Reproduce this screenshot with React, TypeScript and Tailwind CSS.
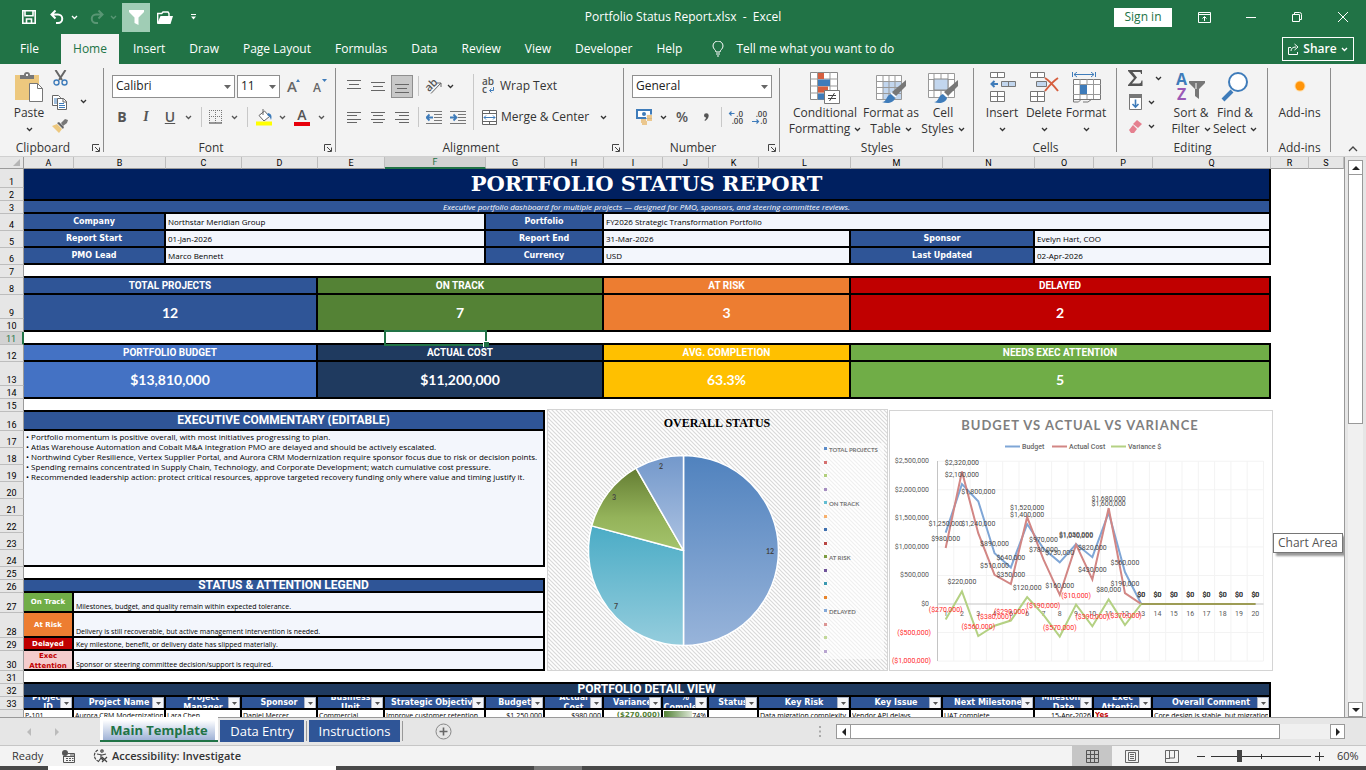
import type { ReactNode } from 'react';
import clsx from 'clsx';

const columns = [
  { name: 'A', width: 'w-[50px]' },
  { name: 'B', width: 'w-[92px]' },
  { name: 'C', width: 'w-[76px]' },
  { name: 'D', width: 'w-[76px]' },
  { name: 'E', width: 'w-[67px]' },
  { name: 'F', width: 'w-[101px]' },
  { name: 'G', width: 'w-[59px]' },
  { name: 'H', width: 'w-[59px]' },
  { name: 'I', width: 'w-[59px]' },
  { name: 'J', width: 'w-[46px]' },
  { name: 'K', width: 'w-[50px]' },
  { name: 'L', width: 'w-[92px]' },
  { name: 'M', width: 'w-[92px]' },
  { name: 'N', width: 'w-[92px]' },
  { name: 'O', width: 'w-[59px]' },
  { name: 'P', width: 'w-[59px]' },
  { name: 'Q', width: 'w-[118px]' },
  { name: 'R', width: 'w-[38px]' },
  { name: 'S', width: '' },
];

const detailHeaders = [
  'Project\nID',
  'Project Name',
  'Project\nManager',
  'Sponsor',
  'Business\nUnit',
  'Strategic Objective',
  'Budget',
  'Actual\nCost',
  'Variance',
  '%\nComplete',
  'Status',
  'Key Risk',
  'Key Issue',
  'Next Milestone',
  'Milestone\nDate',
  'Exec\nAttention',
  'Overall Comment',
];

const menuTabs = ['Insert', 'Draw', 'Page Layout', 'Formulas', 'Data', 'Review', 'View', 'Developer', 'Help'];

const commentary = [
  'Portfolio momentum is positive overall, with most initiatives progressing to plan.',
  'Atlas Warehouse Automation and Cobalt M&A Integration PMO are delayed and should be actively escalated.',
  'Northwind Cyber Resilience, Vertex Supplier Portal, and Aurora CRM Modernization require sponsor focus due to risk or decision points.',
  'Spending remains concentrated in Supply Chain, Technology, and Corporate Development; watch cumulative cost pressure.',
  'Recommended leadership action: protect critical resources, approve targeted recovery funding only where value and timing justify it.',
];

/* ---------- small shared pieces ---------- */

function Chevron({ className = '' }: { className?: string }) {
  return (
    <svg width="7" height="5" viewBox="0 0 7 5" fill="none" className={className}>
      <path d="M1 1l2.5 2.5L6 1" stroke="currentColor" strokeWidth="1.3" />
    </svg>
  );
}

function Tool({ label, width = 'w-6', children }: { label: string; width?: string; children: ReactNode }) {
  return (
    <button type="button" aria-label={label} className={clsx('flex h-6 shrink-0 items-center justify-center', width)}>
      {children}
    </button>
  );
}

function Divider({ width }: { width: string }) {
  return (
    <span className={clsx('flex h-5 shrink-0 justify-center', width)}>
      <span className="w-px bg-[#c8c8c8]" />
    </span>
  );
}

function Group({ label, width, launcher, children }: { label: string; width: string; launcher?: boolean; children: ReactNode }) {
  return (
    <section className={clsx('relative flex shrink-0 flex-col', width)}>
      <div className="h-[76px]">{children}</div>
      <div className={clsx('text-center leading-4', launcher && 'pr-[18px]')}>{label}</div>
      {launcher && (
        <button type="button" aria-label={`${label} settings`} className="absolute right-1 bottom-1">
          <svg width="8" height="8" viewBox="0 0 8 8" fill="none" stroke="#444">
            <path d="M.5 7V.5H7M3 3l4 4M7.5 3.5v4h-4" />
          </svg>
        </button>
      )}
      <span className="absolute top-1 right-0 bottom-1 w-px bg-[#8c8c8c]" />
    </section>
  );
}

function BigButton({ lines, width, inlineArrow, children }: { lines: string[]; width: string; inlineArrow?: boolean; children: ReactNode }) {
  return (
    <button type="button" className={clsx('flex shrink-0 flex-col items-center pt-2 leading-4 whitespace-nowrap', width)}>
      <span className="flex h-[33px] items-start justify-center">{children}</span>
      {lines.map((line, i) => (
        <span key={line} className="flex items-center gap-1">
          {line}
          {inlineArrow && i === lines.length - 1 && <Chevron />}
        </span>
      ))}
      {!inlineArrow && (
        <span className="flex h-4 items-center">
          <Chevron />
        </span>
      )}
    </button>
  );
}

function Combo({ label, value, width }: { label: string; value: string; width: string }) {
  return (
    <div className={clsx('relative', width)}>
      <select aria-label={label} defaultValue={value} className="h-[23px] w-full appearance-none border border-[#8f8f8f] bg-white px-[3px] text-xs text-[#222] outline-none">
        <option>{value}</option>
      </select>
      <svg width="7" height="4" viewBox="0 0 7 4" className="pointer-events-none absolute top-[10px] right-1">
        <path d="M0 0h7L3.500 4z" fill="#666" />
      </svg>
    </div>
  );
}

/* ---------- icons ---------- */

function PasteIcon() {
  return (
    <svg width="28" height="30" viewBox="0 0 28 30">
      <rect x="0" y="3" width="24" height="25" fill="#edc87e" />
      <path d="M5 7V3h4a3 3 0 0 1 6 0h4v4z" fill="#777" />
      <rect x="11" y="2" width="2" height="2" fill="#f3f3f3" />
      <path d="M14.500 11.500h8l5 5v13h-13z" fill="#fff" stroke="#777" />
      <path d="M22.500 11.500v5h5" fill="none" stroke="#777" />
    </svg>
  );
}

function CutIcon() {
  return (
    <svg width="15" height="16" viewBox="0 0 15 16" fill="none">
      <path d="M2.500 0l6.500 10M12.500 0L6 10" stroke="#666" strokeWidth="2" />
      <circle cx="3.500" cy="12.500" r="2.500" stroke="#3f7cba" strokeWidth="1.400" />
      <circle cx="11.500" cy="12.500" r="2.500" stroke="#3f7cba" strokeWidth="1.400" />
    </svg>
  );
}

function CopyIcon() {
  return (
    <svg width="16" height="15" viewBox="0 0 16 15">
      <path d="M.5.5h6l2 2v8h-8z" fill="#fff" stroke="#666" />
      <path d="M2 4h4M2 6h4M2 8h3" stroke="#3f7cba" />
      <path d="M5.500 3.500h6l3 3v8h-9z" fill="#fff" stroke="#666" />
      <path d="M11 3.500V7h4" fill="none" stroke="#666" />
      <path d="M7 8.500h5M7 10.500h6M7 12.500h6" stroke="#3f7cba" />
    </svg>
  );
}

function BrushIcon() {
  return (
    <svg width="16" height="14" viewBox="0 0 16 14">
      <path d="M0 7l5-2 5 5-3 4z" fill="#edc87e" />
      <path d="M5 4l2-1 5 5-1 2z" fill="#666" />
      <path d="M9 4l4-4 3 1-1 3-4 3z" fill="#777" />
    </svg>
  );
}

function AlignIcon({ rows }: { rows: [number, number, number][] }) {
  return (
    <svg width="15" height="13" viewBox="0 0 15 13" stroke="#666">
      {rows.map(([y, x1, x2]) => (
        <path key={y} d={`M${x1} ${y}H${x2}`} />
      ))}
    </svg>
  );
}

function IndentIcon({ right }: { right?: boolean }) {
  return (
    <svg width="16" height="13" viewBox="0 0 16 13" fill="none">
      <path d="M0 .5h16M8 3.500h8M8 6.500h8M8 9.500h8M0 12.500h16" stroke="#777" />
      <path d={right ? 'M0 6.500h6M3.500 3.500l3 3-3 3' : 'M7 6.500H1M3.500 3.500l-3 3 3 3'} stroke="#3f7cba" strokeWidth="1.800" />
    </svg>
  );
}

function FontSizeIcon({ up }: { up?: boolean }) {
  return (
    <svg width="14" height="14" viewBox="0 0 14 14" className="overflow-visible">
      <text x="0" y="13" fontSize={up ? 15 : 12} className="font-['Open_Sans',sans-serif] font-semibold" fill="#666">
        A
      </text>
      <path d={up ? 'M9 3l2-3 2 3z' : 'M9 0h5l-2.500 3z'} fill="#3f7cba" />
    </svg>
  );
}

function BordersIcon() {
  return (
    <svg width="14" height="14" viewBox="0 0 14 14" fill="none" stroke="#777">
      <path d="M.5 0v13M6.500 0v13M12.500 0v13M0 .5h13M0 6.500h13" strokeDasharray="1 1" />
      <path d="M0 13h13" strokeWidth="1.500" />
    </svg>
  );
}

function FillIcon() {
  return (
    <svg width="17" height="17" viewBox="0 0 17 17">
      <path d="M3 6.500L8.500 2l5 5.500L8 12z" fill="#fff" stroke="#666" />
      <path d="M7 0v6" stroke="#666" />
      <path d="M12 4c4 1 4 4 3 7-1-3-2-4-4-5z" fill="#3f7cba" />
      <rect x="0" y="12.500" width="16" height="4" fill="#ff0" />
    </svg>
  );
}

function OrientationIcon() {
  return (
    <svg width="18" height="16" viewBox="0 0 18 16" className="overflow-visible">
      <text x="0" y="11" fontSize="11" transform="rotate(-45 6 8)" className="font-['Open_Sans',sans-serif] font-semibold" fill="#555">
        ab
      </text>
      <path d="M6 15.500L16 5M12 5h4v4" fill="none" stroke="#666" />
    </svg>
  );
}

function WrapIcon() {
  return (
    <svg width="14" height="16" viewBox="0 0 14 16" className="overflow-visible">
      <text x="0" y="7" fontSize="10" className="font-['Open_Sans',sans-serif] font-semibold" fill="#555">
        ab
      </text>
      <text x="0" y="15" fontSize="10" className="font-['Open_Sans',sans-serif] font-semibold" fill="#555">
        c
      </text>
      <path d="M11.500 9v3.500H8M9.500 10.500l-2 2 2 2" fill="none" stroke="#3f7cba" />
    </svg>
  );
}

function MergeIcon() {
  return (
    <svg width="15" height="15" viewBox="0 0 15 15" fill="none">
      <path d="M.5.500h14v14H.5z" fill="#fff" stroke="#666" />
      <path d="M.5 3.500h14M.5 11.500h14M7.500 0v3.500M7.500 11.500V15" stroke="#666" />
      <path d="M2 7.500h11M4 5.500l-2 2 2 2M11 5.500l2 2-2 2" stroke="#3f7cba" />
    </svg>
  );
}

function CurrencyIcon() {
  return (
    <svg width="17" height="16" viewBox="0 0 17 16">
      <path d="M1 1h14v8H1z" fill="#fff" stroke="#3f7cba" strokeWidth="2" />
      <circle cx="8" cy="5" r="2" fill="#3f7cba" />
      <path d="M10 5.500h6v4h-6z" fill="#f3f3f3" />
      <path d="M11 7h5M11 9h5M11 11h5M5 11h5M5 13h6M6 15h5" stroke="#e9b96e" strokeWidth="1.400" />
    </svg>
  );
}

function DecimalIcon({ top, bottom, left }: { top: string; bottom: string; left?: boolean }) {
  return (
    <svg width="16" height="15" viewBox="0 0 16 15" className="overflow-visible">
      <g className="font-['Open_Sans',sans-serif] font-semibold" fontSize="8" fill="#444" textAnchor="end">
        <text x="15" y="7">{top}</text>
        <text x="15" y="14">{bottom}</text>
      </g>
      <path d={left ? 'M6.500 3.500h-5M3.500 1.500l-2 2 2 2' : 'M0 11.500h6M4.500 9.500l2 2-2 2'} fill="none" stroke="#3f7cba" strokeWidth="1.200" />
    </svg>
  );
}

function ConditionalIcon() {
  return (
    <svg width="31" height="32" viewBox="0 0 31 32">
      <path d="M.5.500h27v27H.5z" fill="#fff" stroke="#888" />
      <path d="M0 7h28M0 14h28M0 21h28M7.500 0v28M20 0v28" stroke="#999" />
      <path d="M8 1h6v6H8zM8 14.500h10v6H8z" fill="#d65f3f" />
      <path d="M8 7.500h12v6.500H8zM8 21.500h6v6H8z" fill="#3f7cba" />
      <path d="M14.500 18.500h15v13h-15z" fill="#fff" stroke="#777" />
      <path d="M18 23.500h8M18 26.500h8M24.500 21l-5 8" stroke="#444" />
    </svg>
  );
}

function Paintbrush() {
  return (
    <>
      <path d="M30 8v6L20 24l-4-4z" fill="#777" />
      <path d="M6 30c5 0 4-7 9-8l4 4c-1 5-8 6-13 4z" fill="#3f7cba" />
      <path d="M15 21l5 4" stroke="#fff" strokeWidth="1.500" />
    </>
  );
}

function TableIcon() {
  return (
    <svg width="31" height="32" viewBox="0 0 31 32">
      <path d="M.5 3.500h25v24H.5z" fill="#fff" />
      <path d="M7 9h18v18H7z" fill="#c2d6ee" />
      <path d="M0 9.500h26M0 15.500h26M0 21.500h26M7 3v24M13 3v24M19 3v24M.5 3.500h25v24H.5z" fill="none" stroke="#999" />
      <Paintbrush />
    </svg>
  );
}

function CellStylesIcon() {
  return (
    <svg width="31" height="32" viewBox="0 0 31 32">
      <path d="M.5 1.500h26v24H.5z" fill="#fff" />
      <path d="M0 7.500h27M0 18.500h27M6 1v24M13 1v24M20 1v24M.5 1.500h26v24H.5z" fill="none" stroke="#999" />
      <path d="M6 7h14v11H6z" fill="#c2d6ee" stroke="#888" />
      <Paintbrush />
    </svg>
  );
}

function InsertIcon() {
  return (
    <svg width="27" height="31" viewBox="0 0 27 31" fill="none">
      <path d="M1.500.500h14v5h-14zM8.500.500v5M1.500 19.500h14v10h-14zM8.500 19.500v10M1.500 24.500h14" fill="#fff" stroke="#777" />
      <path d="M12.500 9.500h14v5h-14zM19.500 9.500v5" fill="#c2d6ee" stroke="#777" />
      <path d="M9 12H3M5.500 9l-3 3 3 3" stroke="#3f7cba" strokeWidth="2" />
    </svg>
  );
}

function DeleteIcon() {
  return (
    <svg width="29" height="31" viewBox="0 0 29 31" fill="none">
      <path d="M.5.500h14v5H.5zM7.500.500v5M.5 19.500h14v10H.5zM7.500 19.500v10M.5 24.500h14" fill="#fff" stroke="#777" />
      <path d="M6.500 9.500h10v5h-10z" fill="#c2d6ee" stroke="#777" />
      <path d="M15 6c5 3 9 8 13 13M28 6c-5 3-9 8-13 13" stroke="#d65f3f" strokeWidth="2" />
    </svg>
  );
}

function FormatIcon() {
  return (
    <svg width="29" height="32" viewBox="0 0 29 32" fill="none">
      <path d="M.5 0v5M23.500 0v5M2 2.500h20M5 0L2 2.500 5 5M19 0l3 2.500L19 5" stroke="#3f7cba" />
      <path d="M1.500 7.500h27v20h-27z" fill="#fff" stroke="#777" />
      <path d="M1 12.500h28M1 22.500h28M8 7v20M15 7v5M15 23v4M21.500 7v20" stroke="#999" />
      <path d="M8 13h7v9H8z" fill="#3f7cba" />
      <path d="M1.500 27v3h5l3-3M11 30h5l4-3" stroke="#777" />
    </svg>
  );
}

function SigmaIcon() {
  return (
    <svg width="15" height="16" viewBox="0 0 15 16">
      <path d="M0 0h14v4h-1c0-2-1-2-2-2H4.500L9 7.500 4 13.500h7c2 0 2-1 2.500-3h1V16H0v-1l6-7-6-7z" fill="#555" />
    </svg>
  );
}

function FillDownIcon() {
  return (
    <svg width="14" height="16" viewBox="0 0 14 16">
      <path d="M.5 3.500h12v12H.5z" fill="#fff" stroke="#777" />
      <path d="M0 0h13v4H0z" fill="#777" />
      <path d="M6.500 5.500V13M3.500 10l3 3 3-3" fill="none" stroke="#3f7cba" strokeWidth="1.600" />
    </svg>
  );
}

function EraserIcon() {
  return (
    <svg width="14" height="13" viewBox="0 0 14 13">
      <path d="M8 0l5 4-4 4-5-4z" fill="#e5808f" />
      <path d="M4 5l4 4-3 4H2L0 10z" fill="#e5808f" />
    </svg>
  );
}

function SortIcon() {
  return (
    <svg width="30" height="31" viewBox="0 0 30 31" className="overflow-visible">
      <g fontSize="16" className="font-['Open_Sans',sans-serif] font-bold">
        <text x="0" y="13" fill="#3f7cba">A</text>
        <text x="1" y="28" fill="#9b59b6">Z</text>
      </g>
      <path d="M13 9h16v2l-6 6v10l-4-3v-7l-6-6z" fill="#777" />
      <path d="M20 11v6" stroke="#fff" />
    </svg>
  );
}

function FindIcon() {
  return (
    <svg width="28" height="31" viewBox="0 0 28 31">
      <path d="M2 28l9-9" stroke="#3f7cba" strokeWidth="4" />
      <circle cx="17" cy="10" r="9" fill="#fff" stroke="#3f7cba" strokeWidth="2" />
    </svg>
  );
}

/* ---------- window chrome ---------- */

function TitleBar() {
  return (
    <header className="relative flex h-[34px] shrink-0 items-center justify-between text-white">
      <div className="flex items-center pl-[22px]">
        <button type="button" aria-label="Save">
          <svg width="14" height="14" viewBox="0 0 14 14" fill="none" stroke="#fff" strokeWidth="1.600">
            <path d="M.8.800h12.400v12.400H.8z" />
            <path d="M3 .8v5h8v-5M4.500 13V9h5v4" />
          </svg>
        </button>
        <button type="button" aria-label="Undo" className="ml-[14px] flex items-center gap-[7px]">
          <svg width="14" height="14" viewBox="0 0 14 14" fill="none" stroke="#fff" strokeWidth="2">
            <path d="M5.500.500L1.500 4.500l4 4M2 4.500h6a4.200 4.200 0 0 1 0 8.500H6" />
          </svg>
          <Chevron />
        </button>
        <button type="button" aria-label="Redo" className="ml-3 flex items-center gap-[6px] opacity-25">
          <svg width="14" height="14" viewBox="0 0 14 14" fill="none" stroke="#fff" strokeWidth="2">
            <path d="M8.500.500l4 4-4 4M12 4.500H6A4.200 4.200 0 0 0 6 13h2" />
          </svg>
          <Chevron />
        </button>
        <button type="button" aria-label="Filter" className="ml-[5px] flex h-[29px] w-7 items-center justify-center bg-[#a0cdb5]">
          <svg width="15" height="15" viewBox="0 0 15 15" fill="#fff">
            <path d="M0 0h15v2L9.500 7.500V15l-4-2V7.500L0 2z" />
          </svg>
        </button>
        <button type="button" aria-label="Open" className="ml-[7px]">
          <svg width="16" height="13" viewBox="0 0 16 13">
            <path d="M.7 12V2.500h4L6 1h5l1 1.500V5" fill="none" stroke="#fff" strokeWidth="1.400" />
            <path d="M3.500 5H16l-2.500 8H0z" fill="#fff" />
          </svg>
        </button>
        <button type="button" aria-label="Customize toolbar" className="ml-[18px]">
          <svg width="5" height="6" viewBox="0 0 5 6">
            <path d="M0 0h5v1H0zM0 2.500h5L2.500 5.500z" fill="#fff" />
          </svg>
        </button>
      </div>
      <h1 className="absolute left-1/2 -translate-x-1/2 whitespace-pre">Portfolio Status Report.xlsx  -  Excel</h1>
      <div className="flex items-center pr-[18px]">
        <button type="button" className="h-[19px] w-[58px] bg-white text-[#217346]">
          Sign in
        </button>
        <button type="button" aria-label="Ribbon display options" className="ml-[26px]">
          <svg width="13" height="11" viewBox="0 0 13 11" fill="none" stroke="#fff">
            <path d="M.5.500h12v10H.5zM.5 2.500h12M6.500 9V5M4.500 6.500l2-2 2 2" />
          </svg>
        </button>
        <button type="button" aria-label="Minimize" className="ml-[35px]">
          <svg width="10" height="9" viewBox="0 0 10 9" stroke="#fff">
            <path d="M0 4.500h10" />
          </svg>
        </button>
        <button type="button" aria-label="Restore" className="ml-9">
          <svg width="10" height="10" viewBox="0 0 10 10" fill="none" stroke="#fff">
            <path d="M.5 2.500h7v7h-7zM2.500 2V.500h5a2 2 0 0 1 2 2v5H8" />
          </svg>
        </button>
        <button type="button" aria-label="Close" className="ml-9">
          <svg width="10" height="10" viewBox="0 0 10 10" stroke="#fff">
            <path d="M0 0l10 10M10 0L0 10" />
          </svg>
        </button>
      </div>
    </header>
  );
}

function MenuBar() {
  return (
    <nav className="flex h-[30px] shrink-0 items-center text-white">
      <a href="#file" className="pl-5">File</a>
      <a href="#home" className="ml-[22px] flex h-full w-[58px] items-center justify-center bg-[#f3f3f3] text-[#217346]">
        Home
      </a>
      <div className="ml-[14px] flex items-center gap-6">
        {menuTabs.map((tab) => (
          <a key={tab} href={`#${tab}`} className="whitespace-nowrap">
            {tab}
          </a>
        ))}
      </div>
      <svg width="12" height="16" viewBox="0 0 12 16" fill="none" stroke="#fff" className="ml-[30px]">
        <path d="M4 11C4 9 1 8 1 5a5 5 0 0 1 10 0c0 3-3 4-3 6zM4 13h4M5 15h2" />
      </svg>
      <a href="#tell-me" className="ml-3">Tell me what you want to do</a>
      <button type="button" className="mr-3 ml-auto flex h-6 w-[72px] items-center justify-center gap-1 border border-white font-semibold">
        <svg width="11" height="12" viewBox="0 0 11 12" fill="none" stroke="#fff">
          <path d="M3 4.500H.5v7h9V9M3 8c0-3 2-4 5-4M6.500 1l3.500 3-3.500 3" />
        </svg>
        Share
        <Chevron />
      </button>
    </nav>
  );
}

function Ribbon() {
  return (
    <div className="flex h-[92px] shrink-0 overflow-hidden bg-[#f3f3f3] text-[#333]">
      <Group label="Clipboard" width="w-[104px]" launcher>
        <div className="flex pl-2">
          <BigButton lines={['Paste']} width="w-[42px]">
            <PasteIcon />
          </BigButton>
          <div className="flex flex-col pt-[2px]">
            <Tool label="Cut" width="w-5"><CutIcon /></Tool>
            <Tool label="Copy" width="w-5"><CopyIcon /></Tool>
            <Tool label="Format painter" width="w-5"><BrushIcon /></Tool>
          </div>
          <button type="button" aria-label="Copy options" className="ml-[10px]">
            <Chevron />
          </button>
        </div>
      </Group>

      <Group label="Font" width="w-[232px]" launcher>
        <div className="flex h-11 items-center pl-2">
          <Combo label="Font name" value="Calibri" width="w-[123px]" />
          <Combo label="Font size" value="11" width="ml-[2px] w-[43px]" />
          <Tool label="Increase font size" width="w-7"><FontSizeIcon up /></Tool>
          <Tool label="Decrease font size"><FontSizeIcon /></Tool>
        </div>
        <div className="flex h-[18px] items-center pl-[6px] text-sm text-[#555]">
          <Tool label="Bold"><b>B</b></Tool>
          <Tool label="Italic"><i className="font-['Liberation_Serif',serif] font-bold">I</i></Tool>
          <Tool label="Underline"><span className="font-semibold underline">U</span></Tool>
          <Tool label="Underline options" width="w-3"><Chevron /></Tool>
          <Divider width="w-[14px]" />
          <Tool label="Borders" width="w-4"><BordersIcon /></Tool>
          <Tool label="Border options" width="w-5"><Chevron /></Tool>
          <Divider width="w-[6px]" />
          <Tool label="Fill colour" width="w-7"><FillIcon /></Tool>
          <Tool label="Fill options" width="w-2"><Chevron /></Tool>
          <Tool label="Font colour" width="w-8">
            <span className="w-4 border-b-4 border-red-600 text-center leading-[14px] font-semibold">A</span>
          </Tool>
          <Chevron />
        </div>
      </Group>

      <Group label="Alignment" width="w-[288px]" launcher>
        <div className="flex">
          <div className="pl-[6px]">
            <div className="flex h-11 items-center">
              <Tool label="Top align"><AlignIcon rows={[[0.5, 0, 14], [4.5, 2, 12], [8.5, 0, 14]]} /></Tool>
              <Tool label="Middle align"><AlignIcon rows={[[2.5, 0, 14], [6.5, 2, 12], [10.5, 0, 14]]} /></Tool>
              <button type="button" aria-label="Bottom align" className="mx-px flex h-[23px] w-[22px] items-end justify-center border border-[#8f8f8f] bg-[#c8c8c8] pb-1">
                <AlignIcon rows={[[4.5, 0, 14], [8.5, 2, 12], [12.5, 0, 14]]} />
              </button>
              <Divider width="w-2" />
              <Tool label="Orientation"><OrientationIcon /></Tool>
              <Tool label="Orientation options" width="w-2"><Chevron /></Tool>
            </div>
            <div className="flex h-[18px] items-center">
              <Tool label="Align left"><AlignIcon rows={[[1.5, 0, 14], [4.5, 0, 10], [8.5, 0, 14], [11.5, 0, 10]]} /></Tool>
              <Tool label="Center"><AlignIcon rows={[[1.5, 0, 14], [4.5, 2, 12], [8.5, 0, 14], [11.5, 2, 12]]} /></Tool>
              <Tool label="Align right"><AlignIcon rows={[[1.5, 0, 14], [4.5, 4, 14], [8.5, 0, 14], [11.5, 4, 14]]} /></Tool>
              <Divider width="w-2" />
              <Tool label="Decrease indent"><IndentIcon /></Tool>
              <Tool label="Increase indent"><IndentIcon right /></Tool>
            </div>
          </div>
          <span className="mt-[10px] ml-[3px] h-14 w-px bg-[#c8c8c8]" />
          <div className="pl-2">
            <button type="button" className="flex h-11 items-center gap-1">
              <WrapIcon />
              Wrap Text
            </button>
            <div className="flex h-[18px] items-center">
              <button type="button" className="flex items-center gap-1 whitespace-nowrap">
                <MergeIcon />
                Merge &amp; Center
              </button>
              <button type="button" aria-label="Merge options" className="ml-[11px]">
                <Chevron />
              </button>
            </div>
          </div>
        </div>
      </Group>

      <Group label="Number" width="w-[156px]" launcher>
        <div className="flex h-11 items-center pl-2">
          <Combo label="Number format" value="General" width="w-[140px]" />
        </div>
        <div className="flex h-[18px] items-center pl-2">
          <Tool label="Currency"><CurrencyIcon /></Tool>
          <Tool label="Currency options" width="w-[14px]"><Chevron /></Tool>
          <Tool label="Percent"><span className="text-sm font-semibold text-[#555]">%</span></Tool>
          <Tool label="Comma style">
            <svg width="5" height="8" viewBox="0 0 5 8">
              <path d="M0 2.500a2.300 2.300 0 0 1 4.700 0C4.700 5 3 7 1 8L.5 7C2 6 2 5 2 4.500A2 2 0 0 1 0 2.500z" fill="#555" />
            </svg>
          </Tool>
          <Divider width="w-[6px]" />
          <Tool label="Increase decimal"><DecimalIcon top=".0" bottom=".00" left /></Tool>
          <Tool label="Decrease decimal"><DecimalIcon top=".00" bottom=".0" /></Tool>
        </div>
      </Group>

      <Group label="Styles" width="w-[194px]">
        <div className="flex pl-[7px]">
          <BigButton lines={['Conditional', 'Formatting']} width="w-[76px]" inlineArrow><ConditionalIcon /></BigButton>
          <BigButton lines={['Format as', 'Table']} width="w-14" inlineArrow><TableIcon /></BigButton>
          <BigButton lines={['Cell', 'Styles']} width="w-12" inlineArrow><CellStylesIcon /></BigButton>
        </div>
      </Group>

      <Group label="Cells" width="w-[143px]">
        <div className="flex pl-[7px]">
          <BigButton lines={['Insert']} width="w-[42px]"><InsertIcon /></BigButton>
          <BigButton lines={['Delete']} width="w-[42px]"><DeleteIcon /></BigButton>
          <BigButton lines={['Format']} width="w-[42px]"><FormatIcon /></BigButton>
        </div>
      </Group>

      <Group label="Editing" width="w-[151px]">
        <div className="flex pl-[6px]">
          <div className="flex w-[46px] flex-col pt-[2px]">
            <button type="button" aria-label="AutoSum" className="flex h-6 items-center gap-3 pl-[5px]"><SigmaIcon /><Chevron /></button>
            <button type="button" aria-label="Fill" className="flex h-6 items-center gap-[5px] pl-[6px]"><FillDownIcon /><Chevron /></button>
            <button type="button" aria-label="Clear" className="flex h-6 items-center gap-[5px] pl-[6px]"><EraserIcon /><Chevron /></button>
          </div>
          <BigButton lines={['Sort &', 'Filter']} width="w-11" inlineArrow><SortIcon /></BigButton>
          <BigButton lines={['Find &', 'Select']} width="w-11" inlineArrow><FindIcon /></BigButton>
        </div>
      </Group>

      <Group label="Add-ins" width="w-[63px]">
        <button type="button" className="flex w-full flex-col items-center pt-2 leading-4">
          <span className="flex h-[33px] items-center pb-[6px]">
            <svg width="12" height="12" viewBox="0 0 12 12">
              <circle cx="6" cy="6" r="5.500" fill="#ffd9a0" />
              <circle cx="6" cy="6" r="4.500" fill="#ff9409" />
            </svg>
          </span>
          Add-ins
        </button>
      </Group>

      <button type="button" aria-label="Collapse the ribbon" className="ml-auto self-end pr-2 pb-1">
        <svg width="10" height="6" viewBox="0 0 10 6" fill="none" stroke="#444" strokeWidth="1.300">
          <path d="M1 5l4-4 4 4" />
        </svg>
      </button>
    </div>
  );
}

/* ---------- sheet ---------- */

function Row({ n, height, children }: { n: number; height: string; children?: ReactNode }) {
  const active = n === 11;
  return (
    <tr className={height}>
      <th
        scope="row"
        className={clsx(
          "border-b border-[#bdbdbd] p-0 align-bottom font-['Roboto',sans-serif] text-[9px] leading-[10px] font-normal",
          active ? 'border-r-2 border-r-[#217346] bg-[#d2d2d2] text-[#217346]' : 'border-r border-r-[#9b9b9b] bg-[#e6e6e6] text-black',
        )}
      >
        {n <= 33 && n}
      </th>
      {children}
    </tr>
  );
}

function Cell({ span, rows, className = '', children }: { span?: number; rows?: number; className?: string; children?: ReactNode }) {
  return (
    <td colSpan={span} rowSpan={rows} className={clsx('border-r-2 border-b-2 border-black p-0', className)}>
      <div className="overflow-hidden whitespace-nowrap">{children}</div>
    </td>
  );
}

const Gap = ({ span }: { span: number }) => <td colSpan={span} className="border-b-2 border-black p-0" />;
const Blank = ({ span }: { span: number }) => <td colSpan={span} className="p-0" />;

const labelCell = "bg-[#2f5597] text-center font-['DejaVu_Sans',sans-serif] text-[8px] leading-[10px] font-bold text-white";
const valueCell = 'bg-[#f3f6fc] pl-[2px]! text-[8px] leading-[10px] text-black';
const kpiTitle = "text-center font-['Roboto',sans-serif] text-[10px] leading-3 font-bold text-white";
const kpiValue = "text-center font-['Lato',sans-serif] text-sm leading-5 font-bold text-white";
const sectionCell = "text-center font-['Roboto',sans-serif] text-xs leading-[11px] font-bold text-white";
const legendText = 'bg-[#f3f6fc] pl-[2px]! align-bottom text-[7px] leading-[9px] text-black';
const badgeCell = "text-center font-['DejaVu_Sans',sans-serif] text-[7px] leading-[10px] font-bold text-white";
const dataCell = 'bg-white px-px! pt-px! align-top text-[7px] leading-[9px] text-black';

function FilterButton({ label }: { label: string }) {
  return (
    <button type="button" aria-label={label} className="absolute top-0 right-0 flex h-3 w-3 items-center justify-center border border-[#aab4c8] bg-[#f4f5f8]">
      <svg width="5" height="3" viewBox="0 0 5 3">
        <path d="M0 0h5L2.500 3z" fill="#555" />
      </svg>
    </button>
  );
}

function SheetTable() {
  return (
    <table className="w-full table-fixed border-separate border-spacing-0">
      <colgroup>
        <col className="w-6" />
        {columns.map((c) => (
          <col key={c.name} className={c.width} />
        ))}
      </colgroup>
      <thead>
        <tr className="h-3">
          <th className="border-r border-b border-[#9b9b9b] bg-[#e6e6e6] p-0">
            <svg width="7" height="7" viewBox="0 0 7 7" className="mr-[3px] ml-auto">
              <path d="M7 0v7H0z" fill="#b5b5b5" />
            </svg>
          </th>
          {columns.map((c) => (
            <th
              key={c.name}
              scope="col"
              className={clsx(
                "border-r border-r-[#bdbdbd] p-0 font-['Roboto',sans-serif] text-[9px] leading-[10px] font-normal",
                c.name === 'F' ? 'border-b-2 border-b-[#217346] bg-[#d2d2d2] text-[#217346]' : 'border-b border-b-[#9b9b9b] bg-[#e6e6e6] text-black',
              )}
            >
              {c.name}
            </th>
          ))}
        </tr>
      </thead>
      <tbody>
        <Row n={1} height="h-[19px]">
          <Cell span={17} rows={2} className="bg-[#002060] text-center font-['DejaVu_Serif',serif] text-[21px] leading-6 font-bold text-white">
            PORTFOLIO STATUS REPORT
          </Cell>
          <Blank span={2} />
        </Row>
        <Row n={2} height="h-[13px]"><Blank span={2} /></Row>
        <Row n={3} height="h-[13px]">
          <Cell span={17} className="bg-[#2f5597] text-center text-[8px] leading-[10px] text-white italic">
            Executive portfolio dashboard for multiple projects — designed for PMO, sponsors, and steering committee reviews.
          </Cell>
          <Blank span={2} />
        </Row>
        <Row n={4} height="h-[17px]">
          <Cell span={2} className={labelCell}>Company</Cell>
          <Cell span={4} className={valueCell}>Northstar Meridian Group</Cell>
          <Cell span={2} className={labelCell}>Portfolio</Cell>
          <Cell span={9} className={valueCell}>FY2026 Strategic Transformation Portfolio</Cell>
          <Blank span={2} />
        </Row>
        <Row n={5} height="h-[17px]">
          <Cell span={2} className={labelCell}>Report Start</Cell>
          <Cell span={4} className={valueCell}>01-Jan-2026</Cell>
          <Cell span={2} className={labelCell}>Report End</Cell>
          <Cell span={4} className={valueCell}>31-Mar-2026</Cell>
          <Cell span={2} className={labelCell}>Sponsor</Cell>
          <Cell span={3} className={valueCell}>Evelyn Hart, COO</Cell>
          <Blank span={2} />
        </Row>
        <Row n={6} height="h-[17px]">
          <Cell span={2} className={labelCell}>PMO Lead</Cell>
          <Cell span={4} className={valueCell}>Marco Bennett</Cell>
          <Cell span={2} className={labelCell}>Currency</Cell>
          <Cell span={4} className={valueCell}>USD</Cell>
          <Cell span={2} className={labelCell}>Last Updated</Cell>
          <Cell span={3} className={valueCell}>02-Apr-2026</Cell>
          <Blank span={2} />
        </Row>
        <Row n={7} height="h-[13px]"><Gap span={17} /><Blank span={2} /></Row>

        <Row n={8} height="h-[17px]">
          <Cell span={4} className={clsx(kpiTitle, 'bg-[#2f5597]')}>TOTAL PROJECTS</Cell>
          <Cell span={4} className={clsx(kpiTitle, 'bg-[#548235]')}>ON TRACK</Cell>
          <Cell span={4} className={clsx(kpiTitle, 'bg-[#ed7d31]')}>AT RISK</Cell>
          <Cell span={5} className={clsx(kpiTitle, 'bg-[#c00000]')}>DELAYED</Cell>
          <Blank span={2} />
        </Row>
        <Row n={9} height="h-6">
          <Cell span={4} rows={2} className={clsx(kpiValue, 'bg-[#2f5597]')}>12</Cell>
          <Cell span={4} rows={2} className={clsx(kpiValue, 'bg-[#548235]')}>7</Cell>
          <Cell span={4} rows={2} className={clsx(kpiValue, 'bg-[#ed7d31]')}>3</Cell>
          <Cell span={5} rows={2} className={clsx(kpiValue, 'bg-[#c00000]')}>2</Cell>
          <Blank span={2} />
        </Row>
        <Row n={10} height="h-[13px]"><Blank span={2} /></Row>
        <Row n={11} height="h-[13px]">
          <Gap span={5} />
          <td className="relative z-10 border-b-2 border-black p-0">
            <div className="absolute -inset-x-px -top-[2px] -bottom-[3px] border-2 border-[#217346]" />
            <div className="absolute -right-[3px] -bottom-1 h-[6px] w-[6px] border-t border-l border-white bg-[#217346]" />
          </td>
          <Gap span={11} />
          <Blank span={2} />
        </Row>

        <Row n={12} height="h-[17px]">
          <Cell span={4} className={clsx(kpiTitle, 'bg-[#4472c4]')}>PORTFOLIO BUDGET</Cell>
          <Cell span={4} className={clsx(kpiTitle, 'bg-[#1f3a5f]')}>ACTUAL COST</Cell>
          <Cell span={4} className={clsx(kpiTitle, 'bg-[#ffc000]')}>AVG. COMPLETION</Cell>
          <Cell span={5} className={clsx(kpiTitle, 'bg-[#70ad47]')}>NEEDS EXEC ATTENTION</Cell>
          <Blank span={2} />
        </Row>
        <Row n={13} height="h-6">
          <Cell span={4} rows={2} className={clsx(kpiValue, 'bg-[#4472c4]')}>$13,810,000</Cell>
          <Cell span={4} rows={2} className={clsx(kpiValue, 'bg-[#1f3a5f]')}>$11,200,000</Cell>
          <Cell span={4} rows={2} className={clsx(kpiValue, 'bg-[#ffc000]')}>63.3%</Cell>
          <Cell span={5} rows={2} className={clsx(kpiValue, 'bg-[#70ad47]')}>5</Cell>
          <Blank span={2} />
        </Row>
        <Row n={14} height="h-[13px]"><Blank span={2} /></Row>
        <Row n={15} height="h-[13px]"><Gap span={7} /><Blank span={12} /></Row>

        <Row n={16} height="h-[19px]">
          <Cell span={7} className={clsx(sectionCell, 'bg-[#2f5597]')}>EXECUTIVE COMMENTARY (EDITABLE)</Cell>
          <Blank span={12} />
        </Row>
        <Row n={17} height="h-[17px]">
          <Cell span={7} rows={8} className="bg-[#f3f6fc] pt-px! pl-[2px]! align-top text-[8px] leading-[10px] text-black">
            <ul>
              {commentary.map((line) => (
                <li key={line}>• {line}</li>
              ))}
            </ul>
          </Cell>
          <Blank span={12} />
        </Row>
        {[18, 19, 20, 21, 22, 23, 24].map((n) => (
          <Row key={n} n={n} height="h-[17px]"><Blank span={12} /></Row>
        ))}
        <Row n={25} height="h-[13px]"><Gap span={7} /><Blank span={12} /></Row>

        <Row n={26} height="h-[13px]">
          <Cell span={7} className={clsx(sectionCell, 'bg-[#2f5597]')}>STATUS &amp; ATTENTION LEGEND</Cell>
          <Blank span={12} />
        </Row>
        <Row n={27} height="h-5">
          <Cell className={clsx(badgeCell, 'bg-[#70ad47]')}>On Track</Cell>
          <Cell span={6} className={legendText}>Milestones, budget, and quality remain within expected tolerance.</Cell>
          <Blank span={12} />
        </Row>
        <Row n={28} height="h-[25px]">
          <Cell className={clsx(badgeCell, 'bg-[#ed7d31]')}>At Risk</Cell>
          <Cell span={6} className={legendText}>Delivery is still recoverable, but active management intervention is needed.</Cell>
          <Blank span={12} />
        </Row>
        <Row n={29} height="h-[13px]">
          <Cell className={clsx(badgeCell, 'bg-[#c00000]')}>Delayed</Cell>
          <Cell span={6} className={legendText}>Key milestone, benefit, or delivery date has slipped materially.</Cell>
          <Blank span={12} />
        </Row>
        <Row n={30} height="h-5">
          <td className={clsx(badgeCell, 'border-r-2 border-b-2 border-black bg-[#f4cccc] p-0 text-[#c00000]!')}>
            <div className="h-[18px] overflow-hidden">
              Exec
              <br />
              Attention
            </div>
          </td>
          <Cell span={6} className={legendText}>Sponsor or steering committee decision/support is required.</Cell>
          <Blank span={12} />
        </Row>
        <Row n={31} height="h-[13px]"><Gap span={17} /><Blank span={2} /></Row>

        <Row n={32} height="h-[13px]">
          <Cell span={17} className={clsx(sectionCell, 'bg-[#1f3a5f]')}>PORTFOLIO DETAIL VIEW</Cell>
          <Blank span={2} />
        </Row>
        <Row n={33} height="h-[13px]">
          {detailHeaders.map((name) => (
            <th key={name} scope="col" className={clsx(labelCell, 'border-r-2 border-b-2 border-black p-0')}>
              <div className="relative flex h-[11px] items-center justify-center overflow-hidden leading-[10px] whitespace-pre">
                {name}
                <FilterButton label={`Filter ${name.replace('\n', ' ')}`} />
              </div>
            </th>
          ))}
          <Blank span={2} />
        </Row>
        <Row n={34} height="h-[17px]">
          <Cell className={dataCell}>P-101</Cell>
          <Cell className={dataCell}>Aurora CRM Modernization</Cell>
          <Cell className={dataCell}>Lara Chen</Cell>
          <Cell className={dataCell}>Daniel Mercer</Cell>
          <Cell className={dataCell}>Commercial</Cell>
          <Cell className={dataCell}>Improve customer retention</Cell>
          <Cell className={clsx(dataCell, 'text-right')}>$1,250,000</Cell>
          <Cell className={clsx(dataCell, 'text-right')}>$980,000</Cell>
          <Cell className={clsx(dataCell, "text-right font-['DejaVu_Sans',sans-serif] font-bold text-[#548235]!")}>($270,000)</Cell>
          <Cell className={dataCell}>
            <div className="flex justify-between">
              <span className="h-3 w-[30px] bg-linear-to-r from-[#548235] to-[#dfe8d8]" />
              74%
            </div>
          </Cell>
          <Cell className={dataCell} />
          <Cell className={dataCell}>Data migration complexity</Cell>
          <Cell className={dataCell}>Vendor API delays</Cell>
          <Cell className={dataCell}>UAT complete</Cell>
          <Cell className={clsx(dataCell, 'text-right')}>15-Apr-2026</Cell>
          <Cell className={clsx(dataCell, "font-['DejaVu_Sans',sans-serif] font-bold text-[#c00000]!")}>Yes</Cell>
          <Cell className={dataCell}>Core design is stable, but migration</Cell>
          <Blank span={2} />
        </Row>
      </tbody>
    </table>
  );
}

/* ---------- charts ---------- */

const pieLegend = [
  { color: '#5b8bc9', label: 'TOTAL PROJECTS' },
  { color: '#d5706f', label: '' },
  { color: '#b1cf7c', label: '' },
  { color: '#a58dc0', label: '' },
  { color: '#62bdd2', label: 'ON TRACK' },
  { color: '#f7b06c', label: '' },
  { color: '#3f70b0', label: '' },
  { color: '#b84643', label: '' },
  { color: '#7d9c40', label: 'AT RISK' },
  { color: '#6f539a', label: '' },
  { color: '#3b98b0', label: '' },
  { color: '#e8842b', label: '' },
  { color: '#84a8d8', label: 'DELAYED' },
  { color: '#dc9593', label: '' },
  { color: '#c2d899', label: '' },
  { color: '#b8a5d0', label: '' },
];

function PieChart() {
  return (
    <svg width="341" height="262" viewBox="0 0 341 262" role="img" aria-label="Overall status" className="absolute top-[252px] left-[547px]">
      <defs>
        <pattern id="hatch" width="4" height="4" patternUnits="userSpaceOnUse">
          <rect width="4" height="4" fill="#fff" />
          <path d="M-1 -1l6 6M-1 3l2 2M3 -1l2 2" stroke="#d9d9d9" strokeWidth="1.200" />
        </pattern>
        <linearGradient id="total" x1="0" y1="0" x2="0" y2="1">
          <stop offset="0" stopColor="#5082be" />
          <stop offset="1" stopColor="#98b4da" />
        </linearGradient>
        <linearGradient id="onTrack" x1="0" y1="0" x2="0" y2="1">
          <stop offset="0" stopColor="#4bacc6" />
          <stop offset="1" stopColor="#95cddd" />
        </linearGradient>
        <linearGradient id="atRisk" x1="0" y1="0" x2="0" y2="1">
          <stop offset="0" stopColor="#647d33" />
          <stop offset="0.6" stopColor="#94b35a" />
          <stop offset="1" stopColor="#a5c46c" />
        </linearGradient>
        <linearGradient id="delayed" x1="0" y1="0" x2="0" y2="1">
          <stop offset="0" stopColor="#7398cb" />
          <stop offset="1" stopColor="#adc3e2" />
        </linearGradient>
      </defs>
      <rect x="0.5" y="0.5" width="340" height="261" fill="url(#hatch)" stroke="#d4d4d4" />
      <text x="170" y="18" textAnchor="middle" className="font-['Liberation_Serif',serif] text-xs font-bold">
        OVERALL STATUS
      </text>
      <g stroke="#fff" strokeWidth="1.500" strokeLinejoin="round">
        <path d="M136.500 141.500V46.500a95 95 0 0 1 0 190z" fill="url(#total)" />
        <path d="M136.500 141.500v95A95 95 0 0 1 44.700 116.900z" fill="url(#onTrack)" />
        <path d="M136.500 141.500L44.700 116.900A95 95 0 0 1 89 59.200z" fill="url(#atRisk)" />
        <path d="M136.500 141.500L89 59.200A95 95 0 0 1 136.500 46.500z" fill="url(#delayed)" />
      </g>
      <g className="font-['Lato',sans-serif] text-[7px] font-bold" fill="#444" textAnchor="middle" dominantBaseline="central">
        <text x="223" y="142">12</text>
        <text x="69" y="197">7</text>
        <text x="67" y="88">3</text>
        <text x="114" y="57">2</text>
      </g>
      <rect x="273" y="34" width="64" height="216" fill="#fff" opacity="0.6" />
      {pieLegend.map((item, i) => (
        <g key={i}>
          <rect x="277" y={Math.round(38 + i * 13.5)} width="3" height="3" fill={item.color} />
          <text x="282" y={Math.round(40 + i * 13.5)} dominantBaseline="central" className="font-['Lato',sans-serif] text-[6px] font-bold" fill="#777">
            {item.label}
          </text>
        </g>
      ))}
    </svg>
  );
}

const zeros = [0, 0, 0, 0, 0, 0, 0, 0];
const budget = [1250, 2100, 1800, 890, 640, 1400, 970, 730, 1050, 820, 1600, 560, ...zeros];
const actual = [980, 2320, 1240, 510, 350, 1520, 780, 160, 1040, 430, 1680, 190, ...zeros];
const variance = actual.map((v, i) => v - budget[i]);

const series = [
  { name: 'Budget', values: budget, color: '#7fa6d6', legendX: 116 },
  { name: 'Actual Cost', values: actual, color: '#d28684', legendX: 163 },
  { name: 'Variance $', values: variance, color: '#b4d183', legendX: 222 },
];

const money = (k: number) => {
  const text = `$${(Math.abs(k) * 1000).toLocaleString('en-US')}`;
  return k < 0 ? `(${text})` : text;
};

const px = (i: number) => 48.5 + 16.3 * (i + 0.5);
const py = (k: number) => 194 - k * 0.0571;

function LineChart() {
  return (
    <svg width="384" height="261" viewBox="0 0 384 261" role="img" aria-label="Budget vs actual vs variance" className="absolute top-[253px] left-[889px]">
      <rect x="0.5" y="0.5" width="383" height="260" fill="#fff" stroke="#d4d4d4" />
      <text x="191" y="20" textAnchor="middle" className="font-['Lato',sans-serif] text-[13px] font-bold tracking-[1px]" fill="#7f7f7f">
        BUDGET VS ACTUAL VS VARIANCE
      </text>
      {series.map((s) => (
        <g key={s.name}>
          <path d={`M${s.legendX} 36.500h15`} stroke={s.color} strokeWidth="2" />
          <text x={s.legendX + 17} y="37" dominantBaseline="central" className="font-['Roboto',sans-serif] text-[7px] font-medium" fill="#666">
            {s.name}
          </text>
        </g>
      ))}
      <g stroke="#f3f3f3">
        {Array.from({ length: 20 }, (_, i) => (
          <path key={i} d={`M${px(i + 0.5)} 51V251`} />
        ))}
        {[2500, 2000, 1500, 1000, 500, -500, -1000].map((k) => (
          <path key={k} d={`M48.500 ${py(k)}H374.500`} />
        ))}
      </g>
      <path d="M48.500 51V251M48.500 194H374.500" stroke="#c4c4c4" />
      <g className="font-['Roboto',sans-serif] text-[7px]" dominantBaseline="central">
        {[2500, 2000, 1500, 1000, 500, 0, -500, -1000].map((k) => (
          <text key={k} x={k < 0 ? 42 : 40} y={py(k)} textAnchor="end" fill={k < 0 ? '#ff2a2a' : '#595959'}>
            {money(k)}
          </text>
        ))}
        {budget.map((_, i) => (
          <text key={i} x={px(i)} y="204" textAnchor="middle" fill="#595959">
            {i + 1}
          </text>
        ))}
      </g>
      {series.map((s) => (
        <polyline key={s.name} points={s.values.map((v, i) => `${px(i)},${py(v)}`).join(' ')} fill="none" stroke={s.color} strokeWidth="2" />
      ))}
      <path d={`M${px(12)} 194H${px(19)}`} stroke="#9d9c55" strokeWidth="2" />
      <g className="font-['Roboto',sans-serif] text-[7px]" textAnchor="middle" dominantBaseline="central">
        {series.map((s) =>
          s.values.map((v, i) => (
            <text key={`${s.name}${i}`} x={px(i)} y={py(v) - 9} fill={v < 0 ? '#ff2a2a' : '#4a4a4a'}>
              {money(v)}
            </text>
          )),
        )}
      </g>
    </svg>
  );
}

/* ---------- scroll bars, tabs, status ---------- */

function Arrow({ d }: { d: string }) {
  return (
    <svg width="8" height="8" viewBox="0 0 8 8">
      <path d={d} fill="#222" />
    </svg>
  );
}

const scrollButton = 'flex h-[15px] w-[15px] shrink-0 items-center justify-center border border-[#999] bg-white';

function SheetTabs() {
  return (
    <div className="flex h-[29px] shrink-0 items-start border-t border-b border-t-[#999] border-b-[#c6c6c6] bg-[#e6e6e6] text-[13px]">
      <div className="flex h-full w-[100px] items-center gap-6 pl-[27px]">
        <svg width="4" height="8" viewBox="0 0 4 8"><path d="M4 0v8L0 4z" fill="#bbb" /></svg>
        <svg width="4" height="8" viewBox="0 0 4 8"><path d="M0 0v8l4-4z" fill="#bbb" /></svg>
      </div>
      <button type="button" className="-mt-px h-[25px] w-[118px] border-b-2 border-[#217346] bg-white px-[3px] pt-[3px]">
        <span className="block h-5 bg-linear-to-b from-white to-[#9fb2d6] leading-5 font-bold text-[#217346]">Main Template</span>
      </button>
      <button type="button" className="mt-[2px] ml-[2px] h-[22px] w-[84px] bg-[#2f5597] leading-5 text-white">Data Entry</button>
      <span className="mt-[3px] ml-[2px] h-5 w-px bg-[#999]" />
      <button type="button" className="mt-[2px] ml-[2px] h-[22px] w-[91px] bg-[#2f5597] leading-5 text-white">Instructions</button>
      <span className="mt-[3px] ml-[2px] h-5 w-px bg-[#999]" />
      <button type="button" aria-label="New sheet" className="ml-8 flex h-full items-center">
        <svg width="17" height="17" viewBox="0 0 17 17" fill="none" stroke="#888">
          <circle cx="8.500" cy="8.500" r="7.500" />
          <path d="M8.500 4.500v8M4.500 8.500h8" stroke="#666" strokeWidth="1.600" />
        </svg>
      </button>
      <div className="ml-auto flex h-full w-[547px] items-center">
        <svg width="2" height="11" viewBox="0 0 2 11" fill="#aaa">
          <path d="M0 0h2v2H0zM0 4.500h2v2H0zM0 9h2v2H0z" />
        </svg>
        <button type="button" aria-label="Scroll left" className={clsx(scrollButton, 'ml-[15px]')}><Arrow d="M6 0v8L2 4z" /></button>
        <div className="flex h-[15px] flex-1 bg-[#f0f0f0]">
          <div className="w-[429px] border border-l-0 border-[#999] bg-white" />
        </div>
        <button type="button" aria-label="Scroll right" className={clsx(scrollButton, 'mr-[21px]')}><Arrow d="M2 0v8l4-4z" /></button>
      </div>
    </div>
  );
}

function StatusBar() {
  return (
    <footer className="flex h-5 shrink-0 items-center bg-[#f3f3f3] text-[11px] text-[#333]">
      <span className="w-[62px] pl-3">Ready</span>
      <svg width="13" height="13" viewBox="0 0 13 13" fill="none" stroke="#555">
        <path d="M1.500 6v6.500h11v-9H6M1.500 6.500h11M4 8.500h2M7 8.500h2M10 8.500h1.500M4 10.500h2M7 10.500h2M10 10.500h1.500M8 5h4" />
        <circle cx="3" cy="3" r="3" fill="#555" stroke="none" />
      </svg>
      <button type="button" className="ml-[18px] flex items-center gap-1 font-semibold">
        <svg width="15" height="14" viewBox="0 0 15 14" fill="none" stroke="#444" strokeWidth="1.200">
          <path d="M5 1a6 6 0 0 0 0 11" strokeDasharray="3 1" />
          <circle cx="9" cy="2" r="1.200" />
          <path d="M4 5l5 1 4-1M8 6v3l-3 4M8 9l2 2M9 8l5 5M14 8l-5 5" />
        </svg>
        Accessibility: Investigate
      </button>
      <div className="ml-auto flex h-full items-center">
        <button type="button" aria-label="Normal view" className="flex h-full w-10 items-center justify-center bg-[#c6c6c6]">
          <svg width="13" height="13" viewBox="0 0 13 13" fill="none" stroke="#555">
            <path d="M.5.500h12v12H.5zM4.500 0v13M8.500 0v13M0 4.500h13M0 8.500h13" />
          </svg>
        </button>
        <button type="button" aria-label="Page layout view" className="flex w-10 justify-center">
          <svg width="14" height="13" viewBox="0 0 14 13" fill="none" stroke="#666">
            <path d="M.5.500h13v12H.5zM3.500 2.500h7v8h-7zM5 4.500h4M5 6.500h4M5 8.500h4" />
          </svg>
        </button>
        <button type="button" aria-label="Page break preview" className="flex w-10 justify-center">
          <svg width="14" height="13" viewBox="0 0 14 13" fill="none" stroke="#666">
            <path d="M.5.500h13v12H.5zM4.500 0v8h5V0M0 8.500h5" />
          </svg>
        </button>
        <button type="button" aria-label="Zoom out" className="ml-[5px] h-px w-2 bg-[#333]" />
        <div className="relative ml-[6px] flex w-[100px] items-center">
          <span className="absolute left-1/2 h-[5px] w-px bg-[#333]" />
          <input
            type="range"
            aria-label="Zoom"
            min={10}
            max={190}
            defaultValue={60}
            className="h-px w-full appearance-none bg-[#333] [&::-webkit-slider-thumb]:h-3 [&::-webkit-slider-thumb]:w-[5px] [&::-webkit-slider-thumb]:appearance-none [&::-webkit-slider-thumb]:bg-[#444]"
          />
        </div>
        <button type="button" aria-label="Zoom in" className="ml-1">
          <svg width="9" height="9" viewBox="0 0 9 9" stroke="#333">
            <path d="M4.500 0v9M0 4.500h9" />
          </svg>
        </button>
        <span className="w-[42px] pl-[13px]">60%</span>
      </div>
    </footer>
  );
}

export default function App() {
  return (
    <div className="flex h-screen flex-col overflow-hidden bg-[#217346] font-['Open_Sans',sans-serif] text-xs">
      <TitleBar />
      <MenuBar />
      <Ribbon />

      <main className="flex min-h-0 flex-1 border-t border-[#d0d0d0] bg-[#e6e6e6]">
        <div className="relative min-w-0 flex-1 overflow-hidden border-r border-[#999] bg-white">
          <SheetTable />
          <PieChart />
          <LineChart />
          <div role="tooltip" className="absolute top-[376px] left-[1273px] border border-[#767676] bg-white px-1 leading-[18px] whitespace-nowrap text-[#555] shadow-[3px_3px_2px_rgba(0,0,0,0.4)]">
            Chart Area
          </div>
        </div>
        <div className="flex w-[21px] flex-col items-center pt-[3px]">
          <button type="button" aria-label="Scroll up" className={scrollButton}><Arrow d="M0 6h8L4 2z" /></button>
          <div className="h-[249px] w-[15px] border border-t-0 border-[#999] bg-white" />
          <div className="w-[15px] flex-1 bg-[#f0f0f0]" />
          <button type="button" aria-label="Scroll down" className={scrollButton}><Arrow d="M0 2h8L4 6z" /></button>
        </div>
      </main>

      <SheetTabs />
      <StatusBar />
      {/* top edge of the taskbar */}
      <div className="flex h-1 shrink-0 bg-[#484848]">
        <span className="ml-12 w-72 bg-white" />
        <span className="ml-[198px] w-12 bg-[#777]" />
      </div>
    </div>
  );
}
